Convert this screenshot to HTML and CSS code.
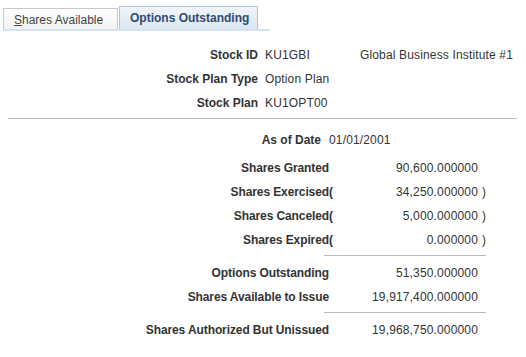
FILE: index.html
```html
<!DOCTYPE html>
<html>
<head>
<meta charset="utf-8">
<link rel="stylesheet" href="styles.css">
</head>
<body>
<div class="tabbar">
  <div class="tabs">
    <div class="tab tab-off"><span class="u">S</span>hares Available</div>
    <div class="tab tab-on">Options Outstanding</div>
  </div>
  <div class="tabline"></div>
</div>

<div class="head">
  <div class="lbl">Stock ID</div><div class="val">KU1GBI</div><div class="desc">Global Business Institute #1</div>
  <div class="lbl">Stock Plan Type</div><div class="val">Option Plan</div><div class="desc"></div>
  <div class="lbl">Stock Plan</div><div class="val">KU1OPT00</div><div class="desc"></div>
</div>

<div class="sep"></div>

<div class="asof">
  <div class="lbl">As of Date</div><div class="val">01/01/2001</div>
</div>

<div class="nums">
  <div class="lbl">Shares Granted</div><div class="po"></div><div class="num">90,600.000000</div><div class="pc"></div>
  <div class="lbl">Shares Exercised</div><div class="po">(</div><div class="num">34,250.000000</div><div class="pc">)</div>
  <div class="lbl">Shares Canceled</div><div class="po">(</div><div class="num">5,000.000000</div><div class="pc">)</div>
  <div class="lbl">Shares Expired</div><div class="po">(</div><div class="num">0.000000</div><div class="pc">)</div>
  <div class="rule"></div>
  <div class="lbl">Options Outstanding</div><div class="po"></div><div class="num">51,350.000000</div><div class="pc"></div>
  <div class="lbl">Shares Available to Issue</div><div class="po"></div><div class="num">19,917,400.000000</div><div class="pc"></div>
  <div class="rule"></div>
  <div class="lbl">Shares Authorized But Unissued</div><div class="po"></div><div class="num">19,968,750.000000</div><div class="pc"></div>
</div>
</body>
</html>
```

FILE: styles.css
```css
html, body {
  margin: 0;
  padding: 0;
  background: #ffffff;
}
body {
  font-family: "Liberation Sans", Arial, sans-serif;
  font-size: 12px;
  color: #333333;
  width: 526px;
  height: 357px;
  overflow: hidden;
}
.tabbar {
  padding-left: 3px;
  width: 267px;
}
.tabs {
  display: flex;
  align-items: flex-end;
  gap: 1px;
  height: 29px;
}
.tab {
  box-sizing: border-box;
  border: 1px solid #c9c9c9;
  border-bottom: none;
  white-space: nowrap;
}
.tab-off {
  height: 21px;
  width: 115px;
  padding: 3px 0 0 10px;
  line-height: 16px;
  color: #444444;
  background: linear-gradient(#ffffff, #f3f3f3);
}
.tab-on {
  height: 23px;
  width: 139px;
  padding: 3px 0 0 10px;
  line-height: 16px;
  font-weight: bold;
  color: #2f4b72;
  border-color: #b3c2d4;
  background: linear-gradient(#f1f5fa, #dbe6f2);
}
.u {
  text-decoration: underline;
}
.tabline {
  height: 2px;
  background: #d6e2ef;
}
.head {
  display: grid;
  grid-template-columns: 258px 102px auto;
  margin-top: 12px;
  line-height: 24px;
}
.lbl {
  text-align: right;
  font-weight: bold;
  white-space: nowrap;
}
.val, .desc, .num {
  letter-spacing: 0.15px;
  white-space: nowrap;
}
.head .val {
  padding-left: 7px;
}
.sep {
  margin: 3px 9px 0 8px;
  height: 1px;
  background: #bbbbbb;
}
.asof {
  display: grid;
  grid-template-columns: 321px auto;
  margin-top: 9px;
  line-height: 24px;
}
.asof .val {
  padding-left: 8px;
}
.nums {
  display: grid;
  grid-template-columns: 329px 4px 145px 12px;
  margin-top: 4px;
  line-height: 24px;
}
.nums .lbl {
  letter-spacing: -0.1px;
}
.po {
  font-weight: bold;
}
.num {
  text-align: right;
}
.pc {
  padding-left: 4px;
}
.rule {
  grid-column: 2 / 5;
  margin: 3px 0 5px -5px;
  height: 1px;
  background: #bbbbbb;
  width: 162px;
}
```
